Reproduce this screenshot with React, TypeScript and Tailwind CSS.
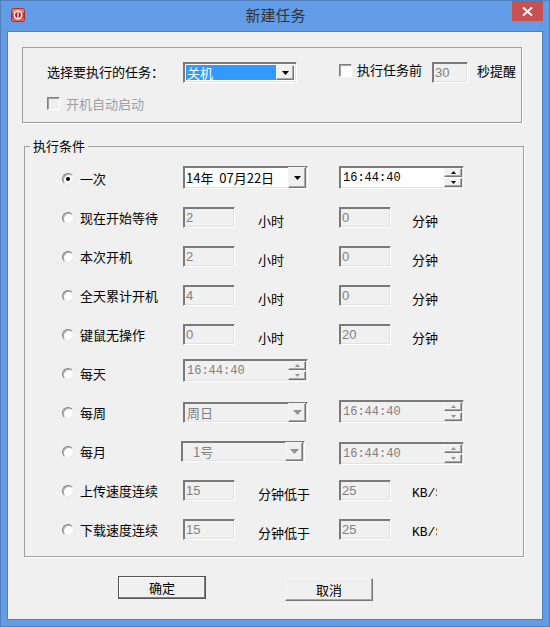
const cjk = "font-['Noto_Sans_CJK_SC','Liberation_Sans',sans-serif]";
const sunken =
  "border border-t-[#7a7a7a] border-l-[#7a7a7a] border-r-white border-b-white shadow-[inset_1px_1px_0_#7a7a7a,inset_-1px_-1px_0_#e2e2e2]";
const raised =
  "border border-t-[#f4f4f4] border-l-[#f4f4f4] border-r-[#777] border-b-[#777] bg-[#f0f0f0] shadow-[inset_-1px_-1px_0_#a8a8a8]";

function AppIcon() {
  return (
    <svg width="14" height="14" viewBox="0 0 14 14" className="shrink-0">
      <rect x="0.5" y="0.5" width="13" height="13" rx="2" fill="#cf3a3a" stroke="#b02c2c" />
      <rect x="1" y="1" width="12" height="4" rx="1" fill="#e97b7b" />
      <rect x="1" y="10" width="12" height="3" rx="1" fill="#e26060" />
      <circle cx="7" cy="7" r="3.7" fill="#a82222" stroke="#fff" strokeWidth="1.5" />
      <rect x="6.3" y="4.2" width="1.4" height="5.6" fill="#f6dcdc" />
    </svg>
  );
}

function Triangle({ up, size = 7, color = "#000" }: { up?: boolean; size?: number; color?: string }) {
  const h = Math.ceil(size / 2);
  return (
    <svg width={size} height={h} viewBox={`0 0 ${size} ${h}`}>
      <polygon points={up ? `${size / 2},0 ${size},${h} 0,${h}` : `0,0 ${size},0 ${size / 2},${h}`} fill={color} />
    </svg>
  );
}

function Radio({ checked }: { checked?: boolean }) {
  return (
    <span className="relative flex h-3 w-3 shrink-0 items-center justify-center rounded-full border border-t-[#808080] border-l-[#808080] border-r-[#e8e8e8] border-b-[#e8e8e8] bg-white shadow-[inset_1px_1px_0_#b0b0b0]">
      {checked && <span className="h-[4px] w-[4px] rounded-full bg-black" />}
    </span>
  );
}

function Check({ disabled }: { disabled?: boolean }) {
  return (
    <span
      className={`block h-[13px] w-[13px] shrink-0 border border-t-[#808080] border-l-[#808080] border-r-white border-b-white shadow-[inset_1px_1px_0_#a0a0a0] ${disabled ? "bg-[#f0f0f0]" : "bg-white"}`}
    />
  );
}

function Field({ value, className = "" }: { value: string; className?: string }) {
  return (
    <div
      className={`flex h-[21px] items-start pl-[2px] pt-[3px] font-['Liberation_Sans',sans-serif] text-[13px] leading-none text-[#808080] ${sunken} ${className}`}
    >
      {value}
    </div>
  );
}

function Unit({ text, className = "" }: { text: string; className?: string }) {
  return <span className={`mt-[6px] text-[13px] leading-none text-black ${className}`}>{text}</span>;
}

function DropButton({ disabled }: { disabled?: boolean }) {
  return (
    <span className={`flex h-full w-[18px] shrink-0 items-center justify-center ${raised}`}>
      <Triangle size={disabled ? 9 : 7} color={disabled ? "#909090" : "#000"} />
    </span>
  );
}

function Spinner({ disabled }: { disabled?: boolean }) {
  const color = disabled ? "#909090" : "#000";
  return (
    <span className="flex h-full w-[18px] shrink-0 flex-col justify-between py-[1px]">
      <span className={`flex h-[9px] items-center justify-center ${raised}`}>
        <Triangle up size={5} color={color} />
      </span>
      <span className={`flex h-[9px] items-center justify-center ${raised}`}>
        <Triangle size={5} color={color} />
      </span>
    </span>
  );
}

function TimeBox({ disabled, className = "" }: { disabled?: boolean; className?: string }) {
  return (
    <div className={`flex h-[23px] w-[125px] items-center justify-between pl-[3px] pr-[1px] ${sunken} ${disabled ? "" : "bg-white"} ${className}`}>
      <span className={`font-['Liberation_Mono',monospace] text-[12px] leading-none ${disabled ? "text-[#808080]" : "text-black"}`}>
        16:44:40
      </span>
      <Spinner disabled={disabled} />
    </div>
  );
}

function DisabledSelect({ value, className = "" }: { value: string; className?: string }) {
  return (
    <div className={`flex h-[21px] items-center justify-between pr-[1px] text-[13px] leading-none text-[#808080] ${sunken} ${className}`}>
      <span>{value}</span>
      <DropButton disabled />
    </div>
  );
}

function Row({ label, checked, mid, right }: { label: string; checked?: boolean; mid?: React.ReactNode; right?: React.ReactNode }) {
  return (
    <div className="grid h-[39px] grid-cols-[121px_156px_1fr] items-center">
      <div className="flex items-center gap-[6px]">
        <Radio checked={checked} />
        <span className="text-[13px] leading-none text-black">{label}</span>
      </div>
      <div className="flex items-center">{mid}</div>
      <div className="flex items-center">{right}</div>
    </div>
  );
}

function Pair({ value, unit, gap, unitClass = "" }: { value: string; unit: string; gap: string; unitClass?: string }) {
  return (
    <>
      <Field value={value} className="w-[52px]" />
      <Unit text={unit} className={`${gap} ${unitClass}`} />
    </>
  );
}

export default function App() {
  const kbs = "w-[25px] overflow-hidden whitespace-nowrap font-['Liberation_Mono',monospace] text-[12px]";
  return (
    <div className={`h-[627px] w-[550px] overflow-hidden ${cjk}`}>
      <div className="flex h-full flex-col border border-[#4f7fbd] bg-[#629ce6] px-[6px] pb-[6px]">
        <div className="flex h-[30px] shrink-0 items-start">
          <div className="mt-[7px] ml-[4px]">
            <AppIcon />
          </div>
          <div className="mt-[3px] flex-1 pl-[14px] text-center text-[15px] leading-[22px] text-[#333]">新建任务</div>
          <div className="flex h-[20px] w-[31px] shrink-0 items-center justify-center bg-[#c75050]">
            <svg width="11" height="9" viewBox="0 0 11 9">
              <path d="M1 0.5 L10 8.5 M10 0.5 L1 8.5" stroke="#fff" strokeWidth="2" />
            </svg>
          </div>
        </div>

        <div className="flex-1 border border-[#4f7fbd] bg-[#f0f0f0]">
          <div className="mt-[15px] ml-[14px] h-[76px] w-[500px] border border-[#a0a0a0] shadow-[1px_1px_0_#fff]">
            <div className="flex items-start pl-[24px] pt-[14px]">
              <span className="mt-[3px] w-[136px] text-[13px] leading-none text-black">选择要执行的任务：</span>
              <div className={`flex h-[21px] w-[114px] items-stretch p-[2px] ${sunken} bg-white`}>
                <span className="flex-1 bg-[#3399ff] pl-[1px] text-[13px] leading-[15px] text-white">关机</span>
                <DropButton />
              </div>
              <span className="ml-[42px] mt-[2px]">
                <Check />
              </span>
              <span className="ml-[5px] mt-[1px] text-[13px] leading-none text-black">执行任务前</span>
              <Field value="30" className="ml-[10px] w-[36px]" />
              <span className="ml-[9px] mt-[2px] text-[13px] leading-none text-black">秒提醒</span>
            </div>
            <div className="flex items-center gap-[6px] pl-[24px] pt-[14px]">
              <Check disabled />
              <span className="text-[13px] leading-none text-[#a0a0a0]">开机自动启动</span>
            </div>
          </div>

          <div className="relative mt-[23px] ml-[16px] w-[500px] border border-[#a0a0a0] pl-[37px] pt-[12px] pb-[7px] shadow-[1px_1px_0_#fff]">
            <span className="absolute -top-[8px] left-[5px] bg-[#f0f0f0] px-[3px] text-[13px] leading-none text-black">执行条件</span>
            <Row
              label="一次"
              checked
              mid={
                <div className={`mb-[2px] flex h-[23px] w-[125px] items-center justify-between bg-white pl-[2px] pr-[1px] ${sunken}`}>
                  <span className="whitespace-pre text-[13px] leading-none text-black">14年  07月22日</span>
                  <DropButton />
                </div>
              }
              right={<TimeBox className="mb-[2px]" />}
            />
            <Row label="现在开始等待" mid={<Pair value="2" unit="小时" gap="ml-[23px]" />} right={<Pair value="0" unit="分钟" gap="ml-[21px]" />} />
            <Row label="本次开机" mid={<Pair value="2" unit="小时" gap="ml-[23px]" />} right={<Pair value="0" unit="分钟" gap="ml-[21px]" />} />
            <Row label="全天累计开机" mid={<Pair value="4" unit="小时" gap="ml-[23px]" />} right={<Pair value="0" unit="分钟" gap="ml-[21px]" />} />
            <Row label="键鼠无操作" mid={<Pair value="0" unit="小时" gap="ml-[23px]" />} right={<Pair value="20" unit="分钟" gap="ml-[21px]" />} />
            <Row label="每天" mid={<TimeBox disabled className="mb-[6px]" />} />
            <Row label="每周" mid={<DisabledSelect value="周日" className="w-[125px] pl-[3px]" />} right={<TimeBox disabled className="mb-[2px]" />} />
            <Row label="每月" mid={<DisabledSelect value="1号" className="-ml-[2px] w-[124px] pl-[11px]" />} right={<TimeBox disabled className="mt-[4px]" />} />
            <Row
              label="上传速度连续"
              mid={<Pair value="15" unit="分钟低于" gap="ml-[23px]" />}
              right={<Pair value="25" unit="KB/S" gap="ml-[21px]" unitClass={kbs} />}
            />
            <Row
              label="下载速度连续"
              mid={<Pair value="15" unit="分钟低于" gap="ml-[23px]" />}
              right={<Pair value="25" unit="KB/S" gap="ml-[21px]" unitClass={kbs} />}
            />
          </div>

          <div className="flex items-start pl-[110px] pt-[19px]">
            <button
              type="button"
              className="h-[23px] w-[88px] border border-[#555] bg-[#f0f0f0] text-[13px] leading-none text-black shadow-[inset_-1px_-1px_0_#808080,inset_1px_1px_0_#fff]"
            >
              确定
            </button>
            <button
              type="button"
              className={`mt-[2px] ml-[79px] h-[23px] w-[88px] text-[13px] leading-none text-black ${raised}`}
            >
              取消
            </button>
          </div>
        </div>
      </div>
    </div>
  );
}
